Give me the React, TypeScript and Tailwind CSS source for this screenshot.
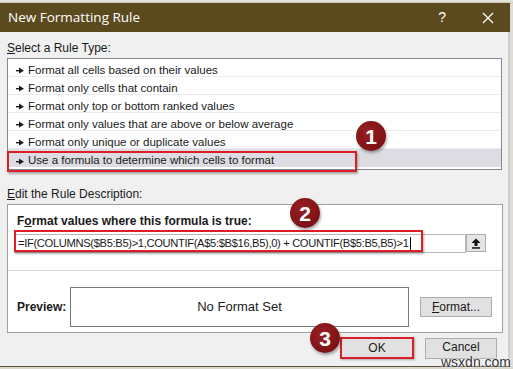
import React from "react";

const rules = [
  "Format all cells based on their values",
  "Format only cells that contain",
  "Format only top or bottom ranked values",
  "Format only values that are above or below average",
  "Format only unique or duplicate values",
  "Use a formula to determine which cells to format",
];

const Arrow = () => (
  <svg width="8" height="7" viewBox="0 0 8 7" className="shrink-0">
    <rect x="0" y="3" width="4" height="1.4" fill="#1a1a1a" />
    <path d="M3 0.5 L8 3.7 L3 6.5 Z" fill="#1a1a1a" />
  </svg>
);

const Badge = ({ n, className }: { n: number; className: string }) => (
  <div
    className={`absolute w-[30px] h-[30px] rounded-full bg-[radial-gradient(circle_at_40%_35%,#9a1f22,#6e0d10)] shadow-[1px_2px_3px_rgba(0,0,0,0.35)] flex items-center justify-center text-white font-bold text-[21px] leading-none ${className}`}
    style={{ fontFamily: "'Liberation Sans', Arial, sans-serif" }}
  >
    {n}
  </div>
);

export default function App() {
  return (
    <div
      className="relative w-[513px] h-[369px] overflow-hidden bg-[#d9d6cc] text-[#1a1a1a] text-[12px]"
      style={{ fontFamily: "'Liberation Sans', Arial, sans-serif" }}
    >
      <div className="h-[3px] bg-[#e4e2da] border-b border-[#cfcab8]" />
      <div className="flex">
        <div className="w-[510px] flex flex-col">
          <div className="h-[29px] bg-[#5b4a1d] flex items-center pl-[8px] pr-[16px] text-white">
            <span className="text-[13.5px]" style={{ fontFamily: "'Open Sans', sans-serif" }}>
              New Formatting Rule
            </span>
            <span className="ml-auto text-[14px] mr-[36px]">?</span>
            <svg width="12" height="12" viewBox="0 0 12 12">
              <path d="M1 1 L11 11 M11 1 L1 11" stroke="#fff" strokeWidth="1.3" />
            </svg>
          </div>

          <div className="h-[334px] bg-[#f0f0f0] flex flex-col px-[7px] border-r-2 border-[#cfcfcf]">
            <div className="mt-[9px] h-[15px] leading-[15px]">
              <span className="underline">S</span>elect a Rule Type:
            </div>
            <div className="mt-[2px] w-[495px] h-[112px] border border-[#828790] bg-white flex flex-col">
              {rules.map((r, i) => (
                <div
                  key={r}
                  className={`h-[18px] flex items-center gap-[4px] pl-[8px] pt-[6px] text-[11.5px] ${
                    i === 5 ? "bg-[#dcdce2]" : "border-b border-[#ececec]"
                  }`}
                >
                  <Arrow />
                  <span>{r}</span>
                </div>
              ))}
            </div>

            <div className="mt-[17px] h-[15px] leading-[15px]">
              <span className="underline">E</span>dit the Rule Description:
            </div>
            <div className="mt-[2px] w-[496px] h-[129px] border border-[#a0a0a0] bg-white flex flex-col">
              <div className="mt-[9px] ml-[9px] font-bold h-[15px] leading-[15px]">
                F<span className="underline">o</span>rmat values where this formula is true:
              </div>
              <div className="mt-[3px] ml-[6px] w-[472px] h-[22px] flex items-center">
                <div className="flex-1 h-[19px] border border-[#b8b8b8] flex items-center pl-[3px] whitespace-nowrap text-[11.2px] tracking-[-0.35px]">
                  =IF(COLUMNS($B5:B5)&gt;1,COUNTIF(A$5:$B$16,B5),0) + COUNTIF(B$5:B5,B5)&gt;1
                  <span className="w-[1px] h-[13px] bg-black ml-[1px]" />
                </div>
                <div className="w-[20px] h-[18px] border border-[#adadad] bg-[#e5e5e5] flex items-center justify-center">
                  <svg width="10" height="11" viewBox="0 0 10 11">
                    <path d="M5 0.5 L9.5 5 L6.5 5 L6.5 8 L3.5 8 L3.5 5 L0.5 5 Z" fill="#111" />
                    <rect x="1" y="9.2" width="8" height="1.5" fill="#111" />
                  </svg>
                </div>
              </div>
              <div className="mt-[16px] h-[1px] bg-[#d5d5d5]" />
              <div className="mt-[16px] flex items-center">
                <span className="ml-[9px] w-[53px] font-bold">Preview:</span>
                <div className="w-[339px] h-[40px] border border-[#7a7a7a] flex items-center justify-center text-[13px]">
                  No Format Set
                </div>
                <button className="ml-[11px] w-[72px] h-[20px] border border-[#adadad] bg-[#e1e1e1] text-[12px]">
                  <span className="underline">F</span>ormat...
                </button>
              </div>
            </div>

            <div className="mt-[4px] flex justify-end gap-[11px] pr-[4px]">
              <button className="w-[74px] h-[22px] border-2 border-[#d9202a] bg-[#e1e1e1] shadow-[1px_1px_2px_rgba(0,0,0,0.3)] text-[12px]">
                OK
              </button>
              <button className="w-[72px] h-[21px] border border-[#adadad] bg-[#e1e1e1] text-[12px] mt-[1px] leading-[14px] pb-[4px]">
                Cancel
              </button>
            </div>
          </div>
          <div className="h-[1px] bg-[#5a5436]" />
        </div>
        <div className="w-[3px] bg-[#dedcd4]" />
      </div>

      <div className="absolute left-[7px] top-[151px] w-[350px] h-[21px] border-2 border-[#dc1f26] shadow-[1px_2px_2px_rgba(0,0,0,0.3)]" />
      <div className="absolute left-[14px] top-[230px] w-[409px] h-[22px] border-2 border-[#dc1f26] shadow-[1px_2px_2px_rgba(0,0,0,0.3)]" />

      <Badge n={1} className="left-[356px] top-[121px]" />
      <Badge n={2} className="left-[290px] top-[198px]" />
      <Badge n={3} className="left-[310px] top-[323px]" />

      <div
        className="absolute left-[441px] top-[355px] text-[14px] text-[#333] leading-none"
        style={{ textShadow: "0 0 2px #fff, 0 0 2px #fff" }}
      >
        wsxdn.com
      </div>
    </div>
  );
}
